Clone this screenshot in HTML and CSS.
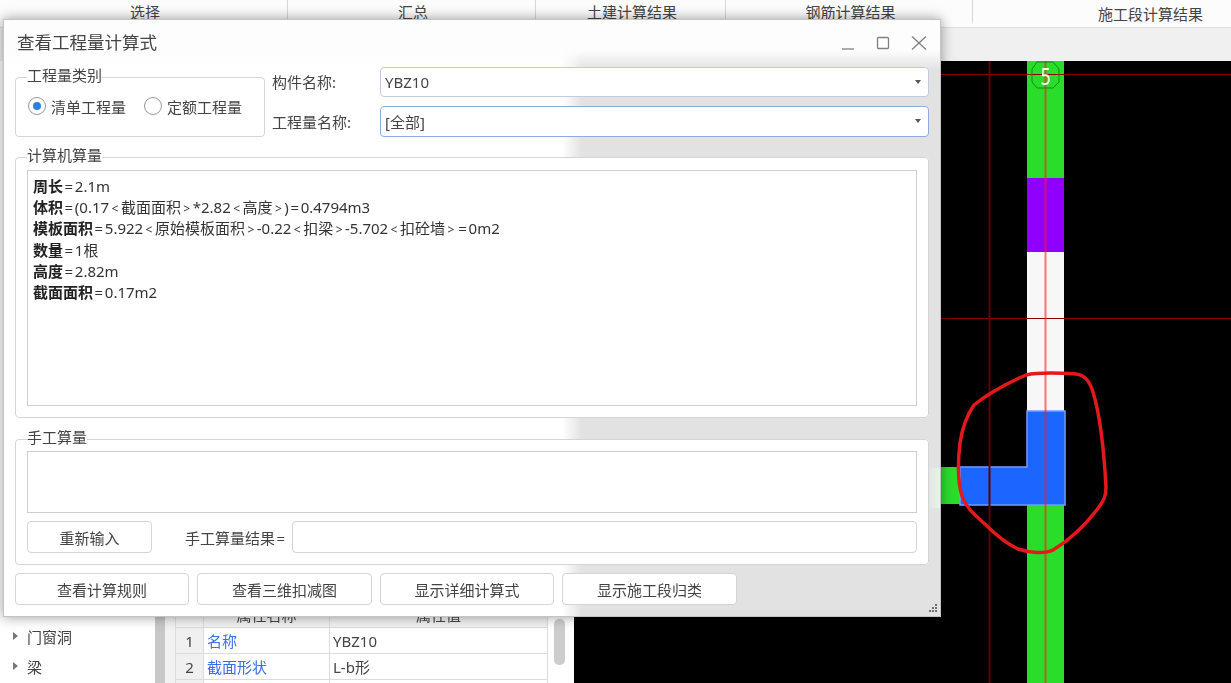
FILE: index.html
```html
<!DOCTYPE html>
<html lang="zh">
<head>
    <meta charset="utf-8">
    <title>查看工程量计算式</title>
    <link rel="stylesheet" href="styles.css">
</head>
<body>
    <div class="tabs">
        <div class="tab">选择</div>
        <div class="tab">汇总</div>
        <div class="tab">土建计算结果</div>
        <div class="tab">钢筋计算结果</div>
        <div class="tab tab-last">施工段计算结果</div>
    </div>
    <div class="toolbar"></div>

    <div class="main">
        <div class="tree">
            <div class="tree-item"><span class="tree-arrow"></span>门窗洞</div>
            <div class="tree-item"><span class="tree-arrow"></span>梁</div>
        </div>
        <div class="splitter"></div>
        <div class="props">
            <table class="props-table">
                <tr class="props-head"><th class="col-num"></th><th class="col-name">属性名称</th><th>属性值</th></tr>
                <tr><td class="row-num">1</td><td class="prop-name">名称</td><td>YBZ10</td></tr>
                <tr><td class="row-num">2</td><td class="prop-name">截面形状</td><td>L-b形</td></tr>
                <tr><td class="row-num"></td><td class="prop-name"></td><td></td></tr>
            </table>
        </div>
        <div class="props-scroll"><div class="thumb"></div></div>

        <svg class="canvas" viewBox="574 61 657 622" width="657" height="622">
            <rect x="574" y="61" width="657" height="622" fill="#000"/>
            <rect x="1027" y="61" width="37" height="117" fill="#2bdd2b"/>
            <rect x="1027" y="178" width="37" height="74" fill="#8f00ff"/>
            <rect x="1027" y="252" width="37" height="159" fill="#f7f7f7"/>
            <rect x="1027" y="505" width="37" height="178" fill="#2bdd2b"/>
            <rect x="941" y="467" width="24" height="37" fill="#2bdd2b"/>
            <polygon points="1027,411 1065,411 1065,505 960,505 960,467 1027,467" fill="#1a66ff" stroke="#6f9fff" stroke-width="1.5"/>
            <rect x="574" y="74" width="657" height="1" fill="#8a0000"/>
            <rect x="574" y="318" width="657" height="1" fill="#8a0000"/>
            <rect x="988.5" y="61" width="2" height="622" fill="#5e0000"/>
            <rect x="1044.5" y="61" width="2" height="622" fill="#ff1a1a" opacity="0.6"/>
            <polygon points="1037,62 1053,62 1059,69 1059,82 1053,88 1037,88 1032,82 1032,69" fill="none" stroke="#148a14"/>
            <text x="0" y="0" fill="#f6fff6" font-size="23" text-anchor="middle" class="axis-num" transform="translate(1045.5 85) scale(0.78 1)">5</text>
            <path d="M1026 375 C1040 372 1060 373 1076 374 C1086 375 1090 383 1093 392 C1100 415 1104 450 1106 487 C1106 496 1104 500 1099 507 C1085 526 1068 541 1053 550 C1045 554 1030 553 1018 549 C1005 543 995 534 986 525 C975 515 966 508 962 496 C957 480 958 460 960 443 C962 430 967 415 974 405 C990 392 1010 382 1026 375 Z" fill="none" stroke="#e3191c" stroke-width="3.5"/>
        </svg>
    </div>

    <div class="dialog">
        <div class="dialog-title">
            <span class="title-text">查看工程量计算式</span>
            <svg class="win-btn win-min" width="14" height="14" viewBox="0 0 14 14"><line x1="1" y1="13" x2="13" y2="13"/></svg>
            <svg class="win-btn win-max" width="14" height="14" viewBox="0 0 14 14"><rect x="1.5" y="1.5" width="11" height="11" rx="1"/></svg>
            <svg class="win-btn win-close" width="16" height="14" viewBox="0 0 16 14"><path d="M1 0.5 L15 13.5 M15 0.5 L1 13.5"/></svg>
        </div>

        <div class="top-row">
            <fieldset class="group group-type">
                <legend>工程量类别</legend>
                <div class="radios">
                    <span class="radio checked"></span><span class="radio-label">清单工程量</span>
                    <span class="radio"></span><span class="radio-label">定额工程量</span>
                </div>
            </fieldset>
            <div class="fields">
                <div class="field">
                    <label class="field-label">构件名称:</label>
                    <div class="select">YBZ10<span class="caret"></span></div>
                </div>
                <div class="field">
                    <label class="field-label">工程量名称:</label>
                    <div class="select select-focus">[全部]<span class="caret"></span></div>
                </div>
            </div>
        </div>

        <fieldset class="group group-auto">
            <legend>计算机算量</legend>
            <div class="formula">
                <div><b>周长</b><i class="op">=</i>2.1m</div>
                <div><b>体积</b><i class="op">=</i>(0.17<i class="op sm">&lt;</i>截面面积<i class="op sm">&gt;</i>*2.82<i class="op sm">&lt;</i>高度<i class="op sm">&gt;</i>)<i class="op">=</i>0.4794m3</div>
                <div><b>模板面积</b><i class="op">=</i>5.922<i class="op sm">&lt;</i>原始模板面积<i class="op sm">&gt;</i>-0.22<i class="op sm">&lt;</i>扣梁<i class="op sm">&gt;</i>-5.702<i class="op sm">&lt;</i>扣砼墙<i class="op sm">&gt;</i><i class="op">=</i>0m2</div>
                <div><b>数量</b><i class="op">=</i>1根</div>
                <div><b>高度</b><i class="op">=</i>2.82m</div>
                <div><b>截面面积</b><i class="op">=</i>0.17m2</div>
            </div>
        </fieldset>

        <fieldset class="group group-manual">
            <legend>手工算量</legend>
            <div class="manual-input"></div>
            <div class="manual-row">
                <button class="btn btn-retype">重新输入</button>
                <span class="result-label">手工算量结果<i class="op">=</i></span>
                <div class="result-input"></div>
            </div>
        </fieldset>

        <div class="actions">
            <button class="btn">查看计算规则</button>
            <button class="btn">查看三维扣减图</button>
            <button class="btn">显示详细计算式</button>
            <button class="btn">显示施工段归类</button>
        </div>

        <svg class="grip" width="10" height="10" viewBox="0 0 10 10">
            <rect x="7" y="0" width="2" height="2"/>
            <rect x="4" y="3" width="2" height="2"/><rect x="7" y="3" width="2" height="2"/>
            <rect x="1" y="6" width="2" height="2"/><rect x="4" y="6" width="2" height="2"/><rect x="7" y="6" width="2" height="2"/>
        </svg>
    </div>
</body>
</html>
```

FILE: styles.css
```css
* {
    box-sizing: border-box;
}

html, body {
    height: 100%;
}

body {
    margin: 0;
    overflow: hidden;
    background: #fff;
    color: #444;
    font-family: "Noto Sans", "Noto Sans CJK SC", sans-serif;
    font-size: 15px;
    display: flex;
    flex-direction: column;
    filter: blur(0.35px);
}

/* app behind the dialog */
.tabs {
    display: grid;
    grid-template-columns: 288px 248px 190px 247px 1fr;
    height: 28px;
    flex: none;
    background: #fcfcfc;
    border-bottom: 1px solid #dedede;
}

.tab {
    height: 23px;
    padding-left: 3px;
    line-height: 25px;
    text-align: center;
    border-right: 1px solid #d8d8d8;
    overflow: visible;
}

.tab-last {
    border-right: 0;
    padding-left: 97px;
    line-height: 28px;
}

.toolbar {
    height: 33px;
    flex: none;
    background: #f0f0f0;
}

.main {
    flex: 1;
    display: flex;
    min-height: 0;
    overflow: hidden;
}

.tree {
    width: 155px;
    flex: none;
    padding-top: 560px;
}

.tree-item {
    display: flex;
    align-items: center;
    height: 30px;
    padding-left: 13px;
}

.tree-arrow {
    width: 0;
    height: 0;
    margin-right: 9px;
    border-left: 5px solid #777;
    border-top: 4px solid transparent;
    border-bottom: 4px solid transparent;
}

.splitter {
    width: 20px;
    flex: none;
    background: linear-gradient(90deg, #c8c8c8 10px, #f2f2f2 10px);
}

.props {
    width: 373px;
    flex: none;
    padding-top: 540px;
}

.props-table {
    width: 100%;
    border-collapse: collapse;
    table-layout: fixed;
}

.props-table th, .props-table td {
    height: 26px;
    padding: 0 3px;
    border: 1px solid #dcdcdc;
    text-align: left;
    font-weight: normal;
}

.props-table th {
    background: #f2f2f2;
    text-align: center;
}

.col-num {
    width: 28px;
}

.col-name {
    width: 126px;
}

.row-num {
    background: #f0f0f0;
    text-align: center !important;
}

.prop-name {
    color: #3a6fe6;
}

.props-scroll {
    width: 26px;
    flex: none;
    padding: 558px 9px 0 6px;
}

.thumb {
    width: 11px;
    height: 46px;
    border-radius: 5px;
    background: #cdcdcd;
}

.canvas {
    display: block;
    flex: none;
}

.axis-num {
    font-family: "Noto Sans", sans-serif;
}

/* dialog */
.dialog {
    position: absolute;
    left: 3px;
    top: 19px;
    width: 938px;
    height: 598px;
    padding: 0 11px;
    border: 1px solid #c4c4c4;
    box-shadow: 0 0 12px rgba(0, 0, 0, 0.4);
    background:
        linear-gradient(90deg, rgba(230, 246, 230, 0), #e6f6e6) no-repeat right 0 top 448px / 12px 40px,
        linear-gradient(180deg, #fdfdfd 30px, rgba(255, 255, 255, 0) 50px),
        linear-gradient(90deg, #fff 558px, #e2e2e2 578px);
}

.dialog-title {
    display: flex;
    align-items: center;
    height: 47px;
    padding-bottom: 2px;
}

.title-text {
    font-size: 17.5px;
    margin-left: 2px;
    margin-bottom: 2px;
    flex: 1;
}

.win-btn {
    fill: none;
    stroke: #808080;
    stroke-width: 1.3;
}

.win-min {
    margin-right: 21px;
}

.win-max {
    margin-right: 21px;
}

.win-close {
    margin-right: 2px;
}

.group {
    margin: 0;
    padding: 0 11px 11px;
    min-width: 0;
    border: 1px solid #d4d4d4;
    border-radius: 4px;
    background: #fff;
}

.group legend {
    padding: 0;
    height: 20px;
    line-height: 16px;
}

.top-row {
    display: flex;
    gap: 7px;
    height: 70px;
    margin-bottom: 10px;
}

.group-type {
    width: 250px;
    height: 70px;
    flex: none;
}

.radios {
    display: flex;
    align-items: center;
    height: 24px;
    margin-top: 7px;
    margin-left: 1px;
}

.radio {
    position: relative;
    width: 18px;
    height: 18px;
    flex: none;
    border: 1px solid #999;
    border-radius: 50%;
    background: #fff;
}

.radio.checked::after {
    content: "";
    position: absolute;
    left: 4px;
    top: 4px;
    width: 8px;
    height: 8px;
    border-radius: 50%;
    background: #2f7fe3;
}

.radio-label {
    margin: 0 18px 0 5px;
    white-space: nowrap;
}

.fields {
    flex: 1;
    display: flex;
    flex-direction: column;
    gap: 9px;
}

.field {
    display: flex;
    align-items: center;
}

.field-label {
    width: 108px;
    flex: none;
    margin-top: -1px;
}

.select {
    flex: 1;
    display: flex;
    align-items: center;
    height: 30px;
    padding-left: 4px;
    padding-bottom: 1px;
    border: 1px solid #c0cbe2;
    border-radius: 4px;
    background: #fff;
}

.select-focus {
    height: 31px;
    border-color: #8dabe0;
}

.caret {
    width: 0;
    height: 0;
    margin-left: auto;
    margin-right: 7px;
    border-top: 4px solid #555;
    border-left: 3px solid transparent;
    border-right: 3px solid transparent;
}

.group-auto {
    height: 271px;
    margin-bottom: 11px;
}

.formula {
    height: 236px;
    margin-top: 3px;
    padding: 5px 5px;
    border: 1px solid #cfcfcf;
    background: #fff;
    white-space: nowrap;
    color: #333;
}

.formula div {
    height: 21.2px;
    line-height: 21px;
}

.formula b {
    color: #222;
}

.op {
    display: inline-block;
    width: 11.8px;
    text-align: center;
    font-style: normal;
}

.op.sm {
    font-size: 12px;
}

.group-manual {
    height: 136px;
    margin-bottom: 8px;
}

.manual-input {
    height: 62px;
    margin-top: 2px;
    border: 1px solid #cfcfcf;
    background: #fff;
}

.manual-row {
    display: flex;
    align-items: center;
    margin-top: 8px;
}

.result-label {
    margin: 0 5px 0 33px;
    white-space: nowrap;
}

.result-input {
    flex: 1;
    height: 32px;
    border: 1px solid #d4d4d4;
    border-radius: 4px;
    background: #fff;
}

.btn {
    height: 32px;
    padding: 0;
    border: 1px solid #d4d4d4;
    border-radius: 4px;
    background: #fff;
    color: #444;
    font: inherit;
}

.btn-retype {
    width: 125px;
    flex: none;
}

.actions {
    display: grid;
    grid-template-columns: 174px 175px 174px 175px;
    gap: 8px;
}

.grip {
    position: absolute;
    right: 2px;
    bottom: 2px;
    fill: #707070;
}
```
